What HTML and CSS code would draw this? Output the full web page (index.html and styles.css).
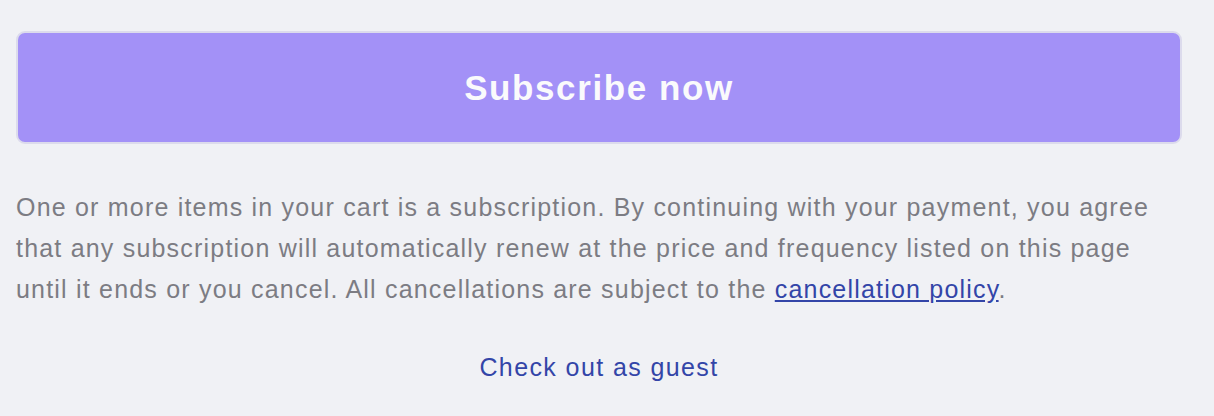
FILE: index.html
```html
<html>
<head>
<meta name="viewport" content="width=device-width, initial-scale=1">
<link rel="stylesheet" href="styles.css">
</head>
<body>
<div class="checkout">
  <button class="subscribe" type="button">Subscribe now</button>
  <p class="terms">One or more items in your cart is a subscription. By continuing with your payment, you agree that any subscription will automatically renew at the price and frequency listed on this page until it ends or you cancel. All cancellations are subject to the <a href="#">cancellation policy</a>.</p>
  <div class="guest"><a href="#">Check out as guest</a></div>
</div>
</body>
</html>
```

FILE: styles.css
```css
body{
  margin: 0;
  background: #f0f1f5;
  font-family: "Liberation Sans", Arial, sans-serif;
}
.checkout{
  width: 1166px;
  padding: 31px 0 0 16px;
}
.subscribe{
  display: block;
  width: 100%;
  height: 113px;
  background: #a391f7;
  border: 2px solid #dcdbec;
  border-radius: 9px;
  color: #fafafc;
  font-family: "Liberation Sans", Arial, sans-serif;
  font-weight: bold;
  font-size: 35px;
  letter-spacing: 1.6px;
  padding: 0;
}
.terms{
  margin: 43px 0 0;
  color: #7c7c83;
  font-size: 25px;
  line-height: 41px;
  letter-spacing: 1.2px;
}
.terms a{
  color: #3345a8;
}
.guest{
  text-align: center;
  margin-top: 43px;
  font-size: 25px;
  letter-spacing: 1.4px;
}
.guest a{
  color: #3345a8;
  text-decoration: none;
}
```
